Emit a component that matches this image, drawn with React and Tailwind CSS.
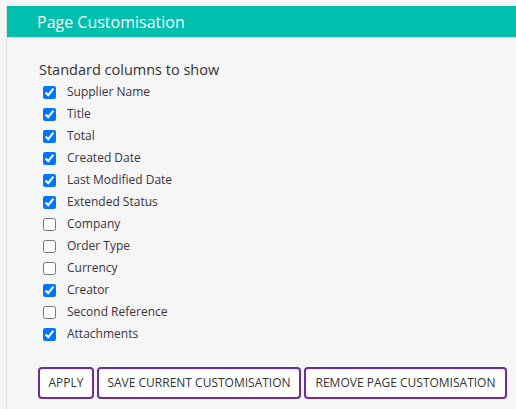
const columns = [
  ["Supplier Name", true],
  ["Title", true],
  ["Total", true],
  ["Created Date", true],
  ["Last Modified Date", true],
  ["Extended Status", true],
  ["Company", false],
  ["Order Type", false],
  ["Currency", false],
  ["Creator", true],
  ["Second Reference", false],
  ["Attachments", true],
];

export default function App() {
  return (
    <div
      className="w-[516px] h-[409px] overflow-hidden bg-[#f6f6f6] pt-[6px] pl-[6px] text-[#333]"
      style={{ fontFamily: '"Open Sans", "Noto Sans", sans-serif' }}
    >
      <div className="h-full border-l border-[#dcdcdc]">
        {/* header bar */}
        <div className="h-[32px] bg-[#00bfad] border-b border-[#e2e2e2] flex items-center pl-[30px]">
          <span className="text-white text-[16px] leading-none">Page Customisation</span>
        </div>

        <div className="pl-[32px] pt-[22px]">
          <div className="text-[14.5px] leading-[20px] text-[#333]">Standard columns to show</div>

          <div className="flex flex-col pt-[1px]">
            {columns.map(([name, checked]) => (
              <label key={name} className="h-[22px] flex items-center text-[12px]">
                <input
                  type="checkbox"
                  defaultChecked={checked}
                  className="w-[13px] h-[13px] m-0 ml-[4px] mr-[11px]"
                />
                <span className="text-[#3a3340]">{name}</span>
              </label>
            ))}
          </div>

          <div className="flex mt-[22px] -ml-[1px]">
            <button className="w-[56px] h-[32px] border-2 border-[#6b2d9b] rounded-[4px] bg-white text-[12px] text-[#333]">
              APPLY
            </button>
            <button className="ml-[3px] w-[204px] h-[32px] border-2 border-[#6b2d9b] rounded-[4px] bg-white text-[12px] text-[#333]">
              SAVE CURRENT CUSTOMISATION
            </button>
            <button className="ml-[3px] w-[203px] h-[32px] border-2 border-[#6b2d9b] rounded-[4px] bg-white text-[12px] text-[#333]">
              REMOVE PAGE CUSTOMISATION
            </button>
          </div>
        </div>
      </div>
    </div>
  );
}
